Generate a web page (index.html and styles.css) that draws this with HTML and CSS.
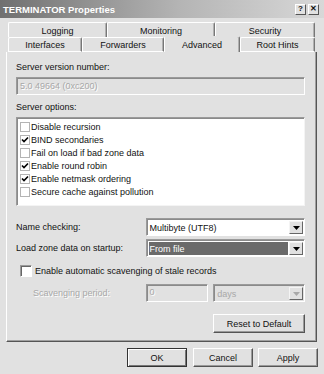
FILE: index.html
```html
<!DOCTYPE html>
<html lang="en">
<head>
    <meta charset="UTF-8">
    <title>TERMINATOR Properties</title>
    <link rel="stylesheet" href="styles.css">
</head>
<body>
    <div class="dialog">
        <div class="titlebar">
            <span class="title">TERMINATOR Properties</span>
            <div class="caption-btns">
                <span class="cbtn">?</span>
                <span class="cbtn">&#x2715;</span>
            </div>
        </div>

        <div class="tabs">
            <div class="tab-row back">
                <div class="tab t-logging">Logging</div>
                <div class="tab t-monitoring">Monitoring</div>
                <div class="tab t-security">Security</div>
            </div>
            <div class="tab-row front">
                <div class="tab t-interfaces">Interfaces</div>
                <div class="tab t-forwarders">Forwarders</div>
                <div class="tab t-advanced selected">Advanced</div>
                <div class="tab t-roothints">Root Hints</div>
            </div>
        </div>

        <div class="panel">
            <div class="label first">Server version number:</div>
            <div class="field disabled version">5.0 49664 (0xc200)</div>

            <div class="label options-label">Server options:</div>
            <div class="listbox">
                <div class="opt"><span class="box"></span>Disable recursion</div>
                <div class="opt"><span class="box"><svg width="8" height="7" viewBox="0 0 8 7"><path d="M1 3.5 L3 5.5 L7 1.5" stroke="#000" stroke-width="1.6" fill="none"/></svg></span>BIND secondaries</div>
                <div class="opt"><span class="box"></span>Fail on load if bad zone data</div>
                <div class="opt"><span class="box"><svg width="8" height="7" viewBox="0 0 8 7"><path d="M1 3.5 L3 5.5 L7 1.5" stroke="#000" stroke-width="1.6" fill="none"/></svg></span>Enable round robin</div>
                <div class="opt"><span class="box"><svg width="8" height="7" viewBox="0 0 8 7"><path d="M1 3.5 L3 5.5 L7 1.5" stroke="#000" stroke-width="1.6" fill="none"/></svg></span>Enable netmask ordering</div>
                <div class="opt"><span class="box"></span>Secure cache against pollution</div>
            </div>

            <div class="row name-row">
                <span class="row-label">Name checking:</span>
                <div class="combo">
                    <span class="combo-text">Multibyte (UTF8)</span>
                    <span class="drop"><svg width="7" height="4" viewBox="0 0 7 4"><path d="M0 0h7L3.5 4z" fill="#000"/></svg></span>
                </div>
            </div>
            <div class="row load-row">
                <span class="row-label">Load zone data on startup:</span>
                <div class="combo">
                    <span class="combo-text selected-text">From file</span>
                    <span class="drop"><svg width="7" height="4" viewBox="0 0 7 4"><path d="M0 0h7L3.5 4z" fill="#000"/></svg></span>
                </div>
            </div>

            <div class="check-row">
                <span class="check3d"></span>
                <span>Enable automatic scavenging of stale records</span>
            </div>

            <div class="row scav-row">
                <span class="row-label scav-label">Scavenging period:</span>
                <div class="field disabled period">0</div>
                <div class="combo disabled days">
                    <span class="combo-text">days</span>
                    <span class="drop"><svg width="7" height="4" viewBox="0 0 7 4"><path d="M0 0h7L3.5 4z" fill="#a8a8a8"/></svg></span>
                </div>
            </div>

            <div class="reset-row">
                <button class="btn reset">Reset to Default</button>
            </div>
        </div>

        <div class="buttons">
            <button class="btn default">OK</button>
            <button class="btn">Cancel</button>
            <button class="btn">Apply</button>
        </div>
    </div>
</body>
</html>
```

FILE: styles.css
```css
body {
    margin: 0;
    background: #e1e1e1;
    font-family: "Liberation Sans", Arial, sans-serif;
    font-size: 9px;
    color: #111;
}
.dialog {
    width: 324px;
    height: 374px;
    background: #e1e1e1;
    overflow: hidden;
}
.titlebar {
    height: 18px;
    display: flex;
    align-items: center;
    justify-content: space-between;
    padding: 0 5px 0 3px;
    background: linear-gradient(to right, #707070, #b4b4b4 55%, #d8d8d8);
}
.title {
    color: #fff;
    font-weight: bold;
    font-size: 9.5px;
}
.caption-btns {
    display: flex;
    gap: 2px;
}
.cbtn {
    width: 9px;
    height: 9px;
    display: flex;
    align-items: center;
    justify-content: center;
    background: #e1e1e1;
    border: 1px solid;
    border-color: #fff #555 #555 #fff;
    font-weight: bold;
    font-size: 8px;
    line-height: 1;
}

/* pestañas */
.tabs {
    margin: 4px 0 0 8px;
    width: 307px;
}
.tab-row {
    display: flex;
    height: 15px;
}
.tab {
    box-sizing: border-box;
    height: 15px;
    display: flex;
    align-items: center;
    justify-content: center;
    border-top: 1px solid #fff;
    border-left: 1px solid #fff;
    border-right: 1px solid #777;
    border-radius: 2px 2px 0 0;
    box-shadow: inset -1px 0 #b0b0b0;
    padding-top: 1px;
}
.t-logging { width: 99px; }
.t-monitoring { width: 108px; }
.t-security { width: 100px; }
.t-interfaces { width: 74px; }
.t-forwarders { width: 82px; }
.t-advanced { width: 76px; }
.t-roothints { width: 75px; }
.tab-row.front .tab {
    border-bottom: 1px solid #fff;
}
.tab.selected {
    border-bottom: none !important;
    border-top-color: transparent;
    margin-top: -1px;
    height: 16px;
    position: relative;
    z-index: 1;
    background: #e1e1e1;
}

.panel {
    box-sizing: border-box;
    margin: 0 0 0 6px;
    width: 311px;
    height: 290px;
    border-left: 1px solid #fff;
    border-right: 1px solid #555;
    border-bottom: 1px solid #555;
    box-shadow: inset -1px -1px #a0a0a0;
    padding: 8px 11px 0 9px;
    display: flex;
    flex-direction: column;
}
.label {
    height: 12px;
    line-height: 12px;
}
.label.first { margin-top: 1px; }
.options-label { margin-top: 6px; }

.field {
    box-sizing: border-box;
    height: 18px;
    line-height: 14px;
    padding: 0 3px;
    background: #fff;
    border: 1px solid;
    border-color: #9a9a9a #fff #fff #9a9a9a;
    box-shadow: inset 1px 1px #8a8a8a;
}
.field.disabled {
    background: #e1e1e1;
    color: #a8a8a8;
    text-shadow: 1px 1px #fff;
}
.version {
    margin-top: 4px;
    padding-top: 1px;
}

.listbox {
    box-sizing: border-box;
    margin-top: 4px;
    height: 89px;
    background: #fff;
    border: 1px solid;
    border-color: #9a9a9a #f4f4f4 #f4f4f4 #9a9a9a;
    box-shadow: inset 1px 1px #8a8a8a;
    padding: 2px 0 0 3px;
}
.opt {
    height: 13px;
    display: flex;
    align-items: center;
}
.box {
    box-sizing: border-box;
    width: 10px;
    height: 10px;
    border: 1px solid #b4b4b4;
    margin-right: 1px;
    display: flex;
    align-items: center;
    justify-content: center;
}

.row {
    display: flex;
    align-items: center;
}
.row-label {
    width: 130px;
}
.name-row { margin-top: 12px; }
.load-row { margin-top: 3px; }

.combo {
    box-sizing: border-box;
    width: 160px;
    height: 18px;
    display: flex;
    align-items: stretch;
    background: #fff;
    border: 1px solid;
    border-color: #9a9a9a #fff #fff #9a9a9a;
    box-shadow: inset 1px 1px #8a8a8a;
    padding: 2px 1px 1px 2px;
}
.combo-text {
    flex: 1;
    display: flex;
    align-items: center;
    padding-left: 1px;
}
.selected-text {
    background: #6a6a6a;
    color: #fff;
    margin-right: 1px;
}
.drop {
    box-sizing: border-box;
    width: 14px;
    display: flex;
    align-items: center;
    justify-content: center;
    background: #e1e1e1;
    border: 1px solid;
    border-color: #f4f4f4 #666 #666 #f4f4f4;
}
.combo.disabled {
    background: #e1e1e1;
    color: #a8a8a8;
}

.check-row {
    margin-top: 7px;
    height: 14px;
    display: flex;
    align-items: center;
    gap: 3px;
    padding-left: 4px;
}
.check3d {
    box-sizing: border-box;
    width: 12px;
    height: 12px;
    background: #fff;
    border: 1px solid;
    border-color: #9a9a9a #fff #fff #9a9a9a;
    box-shadow: inset 1px 1px #666;
}

.scav-row { margin-top: 6px; }
.scav-label {
    padding-left: 17px;
    width: 113px;
    color: #a8a8a8;
    text-shadow: 1px 1px #fff;
}
.period {
    width: 63px;
    margin-right: 5px;
    line-height: 15px;
}
.days {
    width: 92px;
}

.reset-row {
    display: flex;
    justify-content: flex-end;
    margin-top: 12px;
}

.btn {
    box-sizing: border-box;
    width: 60px;
    height: 19px;
    font-family: inherit;
    font-size: 9px;
    color: #111;
    background: #e1e1e1;
    border: 1px solid;
    border-color: #fff #555 #555 #fff;
    box-shadow: inset -1px -1px #9a9a9a;
    padding: 0;
}
.reset {
    width: 92px;
}
.buttons {
    display: flex;
    justify-content: flex-end;
    gap: 5px;
    margin-top: 6px;
    padding-right: 6px;
}
.btn.default {
    border: 1px solid #333;
    box-shadow: inset 1px 1px #fff, inset -1px -1px #777;
    margin-right: 1px;
}
```
